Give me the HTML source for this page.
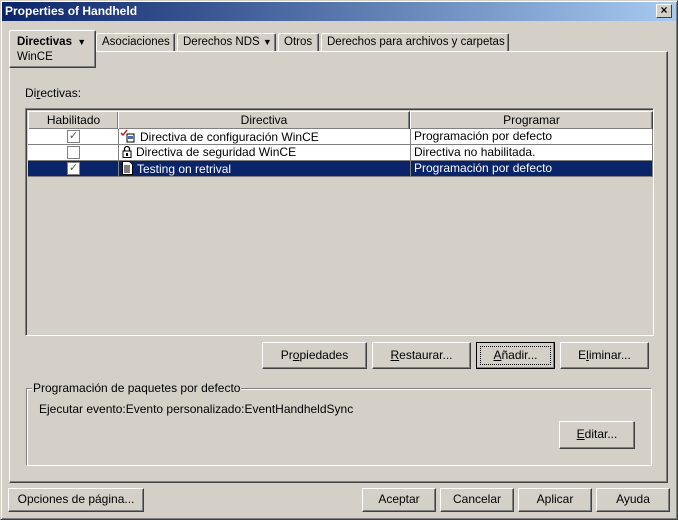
<!DOCTYPE html>
<html><head><meta charset="utf-8"><style>
*{box-sizing:border-box;margin:0;padding:0}
body{width:678px;height:520px;overflow:hidden;background:#d4d0c8;font-family:"Liberation Sans",Arial,sans-serif;font-size:12px;color:#000;position:relative}
.abs{position:absolute}
.win{left:0;top:0;width:678px;height:520px;border:1px solid;border-color:#d4d0c8 #404040 #404040 #d4d0c8;box-shadow:inset 1px 1px #fff,inset -1px -1px #808080}
.title{left:2px;top:2px;width:674px;height:19px;background:linear-gradient(to right,#0a246a,#a6caf0);color:#fff;font-weight:bold;font-size:12px;line-height:19px;padding-left:3px}
.close{left:656px;top:4px;width:16px;height:14px;background:#d4d0c8;border:1px solid;border-color:#fff #404040 #404040 #fff;font-size:12px;line-height:11px;text-align:center;font-weight:bold;color:#000}
.btn{background:#d4d0c8;border:1px solid;border-color:#fff #404040 #404040 #fff;box-shadow:inset -1px -1px #808080;text-align:center;font-size:12px}
.panel{left:9px;top:51px;width:659px;height:432px;border:1px solid;border-color:#fff #404040 #404040 #fff;box-shadow:inset -1px -1px #808080}
.tab{top:33px;height:18px;border:1px solid;border-bottom:none;border-color:#fff #404040 #fff #fff;border-radius:2px 2px 0 0;box-shadow:inset -1px 0 #808080;padding:2px 0 0 5px;font-size:11.5px;white-space:nowrap;overflow:hidden}
.tbl{left:25px;top:108px;width:629px;height:228px;border:1px solid;border-color:#808080 #fff #fff #808080;box-shadow:inset 1px 1px #404040;background:#d4d0c8}
.hd{top:2px;height:19px;border:1px solid;border-color:#fff #404040 #404040 #fff;box-shadow:inset -1px -1px #808080;text-align:center;line-height:17px}
.row{left:2px;width:625px;height:16px;background:#fff;line-height:15px}
.cell{top:0;height:16px;border-right:1px solid #808080;border-bottom:1px solid #808080;padding-left:3px;white-space:nowrap}
.cb{width:13px;height:13px;border:1px solid #808080;background:#fff;left:39px;top:1px;font-size:11px;line-height:11px;text-align:center;color:#555}
.sel{background:#0a246a;color:#fff}
svg{vertical-align:-2px;margin-right:4px}
u{text-decoration:underline}
</style></head><body>
<div class="abs win"></div>
<div class="abs title">Properties of Handheld</div>
<div class="abs close">×</div>

<div class="abs panel"></div>
<div class="abs tab" style="left:96px;width:79px">Asociaciones</div>
<div class="abs tab" style="left:177px;width:99px">Derechos NDS <span style="font-size:9px">▼</span></div>
<div class="abs tab" style="left:278px;width:41px">Otros</div>
<div class="abs tab" style="left:321px;width:188px">Derechos para archivos y carpetas</div>
<div class="abs" style="left:9px;top:30px;width:87px;height:38px;background:#d4d0c8;border:1px solid;border-color:#fff #404040 #404040 #fff;box-shadow:inset -1px -1px #808080;border-radius:2px 2px 0 0;padding:4px 0 0 7px;line-height:15px;font-size:11.5px"><b>Directivas</b> <span style="font-size:9px;margin-left:2px">▼</span><br>WinCE</div>

<div class="abs" style="left:25px;top:86px">Di<u>r</u>ectivas:</div>
<div class="abs tbl">
 <div class="abs hd" style="left:2px;width:91px">Habilitado</div>
 <div class="abs hd" style="left:92px;width:292px">Directiva</div>
 <div class="abs hd" style="left:384px;width:243px">Programar</div>
 <div class="abs row" style="top:20px">
  <div class="abs cell" style="left:0;width:91px"><div class="abs cb">✓</div></div>
  <div class="abs cell" style="left:91px;width:292px;padding-left:1px"><svg width="16" height="14" viewBox="0 0 16 14"><path d="M1 4l2 2 4-5" stroke="#c00" fill="none" stroke-width="1.3"/><rect x="7" y="5" width="7" height="8" fill="#fff" stroke="#000"/><rect x="8" y="7" width="5" height="3" fill="#4a6ab0"/></svg>Directiva de configuración WinCE</div>
  <div class="abs cell" style="left:383px;width:242px">Programación por defecto</div>
 </div>
 <div class="abs row" style="top:36px">
  <div class="abs cell" style="left:0;width:91px"><div class="abs cb"></div></div>
  <div class="abs cell" style="left:91px;width:292px"><svg width="10" height="13" viewBox="0 0 10 13"><path d="M2.5 6V4a2.5 2.5 0 0 1 5 0v2" stroke="#000" fill="none" stroke-width="1.3"/><rect x="1" y="6" width="8" height="6.5" fill="#fff" stroke="#000"/><rect x="4" y="8" width="2" height="3" fill="#000"/></svg>Directiva de seguridad WinCE</div>
  <div class="abs cell" style="left:383px;width:242px">Directiva no habilitada.</div>
 </div>
 <div class="abs row sel" style="top:52px">
  <div class="abs cell" style="left:0;width:91px"><div class="abs cb">✓</div></div>
  <div class="abs cell" style="left:91px;width:292px"><svg width="11" height="14" viewBox="0 0 11 14"><path d="M0.5 0.5h7l3 3v10h-10z" fill="#fff" stroke="#000"/><path d="M2 5h6M2 7h6M2 9h6M2 11h6" stroke="#000"/></svg>Testing on retrival</div>
  <div class="abs cell" style="left:383px;width:242px">Programación por defecto</div>
 </div>
</div>

<div class="abs btn" style="left:262px;top:342px;width:105px;height:27px;line-height:24px">Pr<u>o</u>piedades</div>
<div class="abs btn" style="left:372px;top:342px;width:99px;height:27px;line-height:24px"><u>R</u>estaurar...</div>
<div class="abs btn" style="left:476px;top:342px;width:79px;height:27px;line-height:24px;border-color:#000;outline:1px dotted #000;outline-offset:-5px"><u>A</u>ñadir...</div>
<div class="abs btn" style="left:560px;top:342px;width:89px;height:27px;line-height:24px">E<u>l</u>iminar...</div>

<div class="abs" style="left:26px;top:388px;width:626px;height:78px;border:1px solid;border-color:#808080 #fff #fff #808080;box-shadow:inset 1px 1px #fff,1px 1px 0 #808080 inset"></div>
<div class="abs" style="left:32px;top:381px;background:#d4d0c8;padding:0 1px">Programación de paquetes por defecto</div>
<div class="abs" style="left:39px;top:402px">Ejecutar evento:Evento personalizado:EventHandheldSync</div>
<div class="abs btn" style="left:559px;top:421px;width:76px;height:28px;line-height:25px"><u>E</u>ditar...</div>

<div class="abs btn" style="left:8px;top:488px;width:136px;height:24px;line-height:21px">Opciones de página...</div>
<div class="abs btn" style="left:362px;top:488px;width:74px;height:24px;line-height:21px">Aceptar</div>
<div class="abs btn" style="left:440px;top:488px;width:74px;height:24px;line-height:21px">Cancelar</div>
<div class="abs btn" style="left:518px;top:488px;width:74px;height:24px;line-height:21px">Aplicar</div>
<div class="abs btn" style="left:596px;top:488px;width:74px;height:24px;line-height:21px">Ayuda</div>
</body></html>
